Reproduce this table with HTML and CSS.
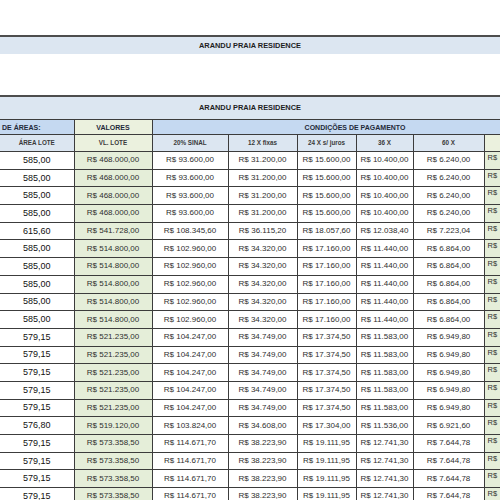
FILE: index.html
```html
<!DOCTYPE html>
<html lang="pt-BR">
<head>
  <meta charset="UTF-8" />
  <meta name="viewport" content="width=device-width, initial-scale=1.0"/>
  <title>Arandu Praia Residence</title>
  <link rel="stylesheet" href="styles.css">
</head>
<body>
  <div class="sheet">
    <div class="title-band">ARANDU PRAIA RESIDENCE</div>
    <div class="spacer"></div>
    <div class="title-band tall">ARANDU PRAIA RESIDENCE</div>

    <table class="price-table">
      <colgroup>
        <col class="c-area">
        <col class="c-valor">
        <col class="c-sinal">
        <col class="c-fixas">
        <col class="c-juros">
        <col class="c-36">
        <col class="c-60">
        <col class="c-next">
      </colgroup>
      <thead>
        <tr class="group-row">
          <th class="blue left">DE ÁREAS:</th>
          <th class="green">VALORES</th>
          <th class="blue" colspan="6">CONDIÇÕES DE PAGAMENTO</th>
        </tr>
        <tr class="label-row">
          <th>ÁREA LOTE</th>
          <th class="green">VL. LOTE</th>
          <th>20% SINAL</th>
          <th>12 X fixas</th>
          <th>24 X s/ juros</th>
          <th>36 X</th>
          <th>60 X</th>
          <th class="green"></th>
        </tr>
      </thead>
      <tbody>
        <tr><td class="area">585,00</td><td class="valor">R$ 468.000,00</td><td>R$ 93.600,00</td><td>R$ 31.200,00</td><td>R$ 15.600,00</td><td>R$ 10.400,00</td><td>R$ 6.240,00</td><td class="next">R$</td></tr>
        <tr><td class="area">585,00</td><td class="valor">R$ 468.000,00</td><td>R$ 93.600,00</td><td>R$ 31.200,00</td><td>R$ 15.600,00</td><td>R$ 10.400,00</td><td>R$ 6.240,00</td><td class="next">R$</td></tr>
        <tr><td class="area">585,00</td><td class="valor">R$ 468.000,00</td><td>R$ 93.600,00</td><td>R$ 31.200,00</td><td>R$ 15.600,00</td><td>R$ 10.400,00</td><td>R$ 6.240,00</td><td class="next">R$</td></tr>
        <tr><td class="area">585,00</td><td class="valor">R$ 468.000,00</td><td>R$ 93.600,00</td><td>R$ 31.200,00</td><td>R$ 15.600,00</td><td>R$ 10.400,00</td><td>R$ 6.240,00</td><td class="next">R$</td></tr>
        <tr><td class="area">615,60</td><td class="valor">R$ 541.728,00</td><td>R$ 108.345,60</td><td>R$ 36.115,20</td><td>R$ 18.057,60</td><td>R$ 12.038,40</td><td>R$ 7.223,04</td><td class="next">R$</td></tr>
        <tr><td class="area">585,00</td><td class="valor">R$ 514.800,00</td><td>R$ 102.960,00</td><td>R$ 34.320,00</td><td>R$ 17.160,00</td><td>R$ 11.440,00</td><td>R$ 6.864,00</td><td class="next">R$</td></tr>
        <tr><td class="area">585,00</td><td class="valor">R$ 514.800,00</td><td>R$ 102.960,00</td><td>R$ 34.320,00</td><td>R$ 17.160,00</td><td>R$ 11.440,00</td><td>R$ 6.864,00</td><td class="next">R$</td></tr>
        <tr><td class="area">585,00</td><td class="valor">R$ 514.800,00</td><td>R$ 102.960,00</td><td>R$ 34.320,00</td><td>R$ 17.160,00</td><td>R$ 11.440,00</td><td>R$ 6.864,00</td><td class="next">R$</td></tr>
        <tr><td class="area">585,00</td><td class="valor">R$ 514.800,00</td><td>R$ 102.960,00</td><td>R$ 34.320,00</td><td>R$ 17.160,00</td><td>R$ 11.440,00</td><td>R$ 6.864,00</td><td class="next">R$</td></tr>
        <tr><td class="area">585,00</td><td class="valor">R$ 514.800,00</td><td>R$ 102.960,00</td><td>R$ 34.320,00</td><td>R$ 17.160,00</td><td>R$ 11.440,00</td><td>R$ 6.864,00</td><td class="next">R$</td></tr>
        <tr><td class="area">579,15</td><td class="valor">R$ 521.235,00</td><td>R$ 104.247,00</td><td>R$ 34.749,00</td><td>R$ 17.374,50</td><td>R$ 11.583,00</td><td>R$ 6.949,80</td><td class="next">R$</td></tr>
        <tr><td class="area">579,15</td><td class="valor">R$ 521.235,00</td><td>R$ 104.247,00</td><td>R$ 34.749,00</td><td>R$ 17.374,50</td><td>R$ 11.583,00</td><td>R$ 6.949,80</td><td class="next">R$</td></tr>
        <tr><td class="area">579,15</td><td class="valor">R$ 521.235,00</td><td>R$ 104.247,00</td><td>R$ 34.749,00</td><td>R$ 17.374,50</td><td>R$ 11.583,00</td><td>R$ 6.949,80</td><td class="next">R$</td></tr>
        <tr><td class="area">579,15</td><td class="valor">R$ 521.235,00</td><td>R$ 104.247,00</td><td>R$ 34.749,00</td><td>R$ 17.374,50</td><td>R$ 11.583,00</td><td>R$ 6.949,80</td><td class="next">R$</td></tr>
        <tr><td class="area">579,15</td><td class="valor">R$ 521.235,00</td><td>R$ 104.247,00</td><td>R$ 34.749,00</td><td>R$ 17.374,50</td><td>R$ 11.583,00</td><td>R$ 6.949,80</td><td class="next">R$</td></tr>
        <tr><td class="area">576,80</td><td class="valor">R$ 519.120,00</td><td>R$ 103.824,00</td><td>R$ 34.608,00</td><td>R$ 17.304,00</td><td>R$ 11.536,00</td><td>R$ 6.921,60</td><td class="next">R$</td></tr>
        <tr><td class="area">579,15</td><td class="valor">R$ 573.358,50</td><td>R$ 114.671,70</td><td>R$ 38.223,90</td><td>R$ 19.111,95</td><td>R$ 12.741,30</td><td>R$ 7.644,78</td><td class="next">R$</td></tr>
        <tr><td class="area">579,15</td><td class="valor">R$ 573.358,50</td><td>R$ 114.671,70</td><td>R$ 38.223,90</td><td>R$ 19.111,95</td><td>R$ 12.741,30</td><td>R$ 7.644,78</td><td class="next">R$</td></tr>
        <tr><td class="area">579,15</td><td class="valor">R$ 573.358,50</td><td>R$ 114.671,70</td><td>R$ 38.223,90</td><td>R$ 19.111,95</td><td>R$ 12.741,30</td><td>R$ 7.644,78</td><td class="next">R$</td></tr>
        <tr><td class="area">579,15</td><td class="valor">R$ 573.358,50</td><td>R$ 114.671,70</td><td>R$ 38.223,90</td><td>R$ 19.111,95</td><td>R$ 12.741,30</td><td>R$ 7.644,78</td><td class="next">R$</td></tr>
      </tbody>
    </table>
  </div>
</body>
</html>
```

FILE: styles.css
```css
:root {
  --band-blue: #dce6f1;
  --head-blue: #c5d9f1;
  --head-green: #ebf1de;
  --cell-green: #e5eed9;
  --line: #3c3c3c;
  --text: #2a2a2a;
}

html,
body {
  margin: 0;
  overflow: hidden;
  background: #fff;
}

body {
  font-family: "Liberation Sans", Arial, sans-serif;
  color: var(--text);
}

.sheet {
  width: 560px;
  padding-top: 35px;
}

.title-band {
  height: 17px;
  border-top: 2px solid #4d4d4d;
  background-color: var(--band-blue);
  font-size: 7.4px;
  font-weight: bold;
  line-height: 17px;
  text-align: center;
  padding-right: 60px;
  color: #1e1e1e;
}

.title-band.tall {
  height: 22px;
  line-height: 22px;
}

.spacer {
  height: 41px;
}

.price-table {
  border-collapse: collapse;
  table-layout: fixed;
  width: 558px;
}

.c-area { width: 74px; }
.c-valor { width: 78px; }
.c-sinal { width: 76px; }
.c-fixas { width: 69px; }
.c-juros { width: 59px; }
.c-36 { width: 57px; }
.c-60 { width: 71px; }
.c-next { width: 74px; }

.price-table th,
.price-table td {
  border: 1px solid var(--line);
  padding: 0;
  line-height: 1;
  text-align: center;
  white-space: nowrap;
  overflow: hidden;
}

.price-table th:first-child,
.price-table td:first-child {
  border-left: none;
}

.group-row {
  height: 15px;
}

.group-row th {
  font-size: 7px;
  font-weight: bold;
  color: #1f2a3a;
}

.group-row .left {
  text-align: left;
  padding-left: 2px;
}

.label-row {
  height: 17px;
}

.label-row th {
  background-color: var(--band-blue);
  font-size: 6.3px;
  font-weight: bold;
  color: #3a3a3a;
}

.blue {
  background-color: var(--head-blue);
}

.price-table .green {
  background-color: var(--head-green);
}

.price-table tbody tr {
  height: 17.7px;
}

.price-table td {
  font-size: 8px;
  color: #2e2e2e;
}

.price-table td.area {
  font-size: 9px;
  color: #111;
}

.price-table td.valor {
  background-color: var(--cell-green);
}

.price-table td.next {
  background-color: var(--cell-green);
  text-align: left;
  vertical-align: top;
  padding: 2px 0 0 3px;
  font-size: 7.5px;
}
```
